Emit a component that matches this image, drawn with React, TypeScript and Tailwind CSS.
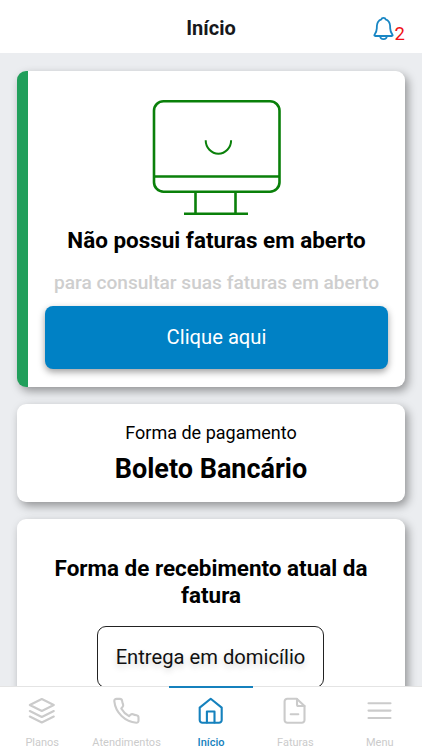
import type { ReactNode } from 'react'

const strokeProps = {
  fill: 'none',
  stroke: 'currentColor',
  strokeWidth: 2.1,
  strokeLinecap: 'round',
  strokeLinejoin: 'round',
} as const

function NavIcon({ children }: { children: ReactNode }) {
  return (
    <svg viewBox="0 0 30 30" className="h-[30px] w-[30px]" {...strokeProps}>
      {children}
    </svg>
  )
}

const tabs = [
  {
    label: 'Planos',
    icon: (
      <>
        <path d="M14.800 3 26.800 9 14.800 15 2.800 9Z" />
        <path d="m2.800 15 12 6 12-6" />
        <path d="m2.800 20.500 12 6 12-6" />
      </>
    ),
  },
  {
    label: 'Atendimentos',
    icon: (
      <path d="M4.500 2.900h3.400c1.300 0 2 .7 2.200 1.900.2 1.300.5 2.500 1 3.700.3.900.1 1.700-.5 2.400l-1.300 1.500c1.800 3.300 4.400 5.900 7.700 7.700l1.500-1.300c.7-.6 1.500-.8 2.400-.5 1.200.5 2.400.8 3.700 1 1.200.2 1.900 1 1.900 2.200v3.200c0 1.300-1 2.100-2.200 2C13.200 25.800 3.500 17 2.300 5.200c-.1-1.300.9-2.300 2.200-2.300Z" />
    ),
  },
  {
    label: 'Início',
    active: true,
    icon: (
      <>
        <path d="M3.700 11.600 14.700 2.800l11 8.800V24a2.700 2.700 0 0 1-2.700 2.700H6.400A2.700 2.700 0 0 1 3.700 24Z" />
        <path d="M10.900 26.500V15.500h7.600v11" />
      </>
    ),
  },
  {
    label: 'Faturas',
    icon: (
      <>
        <path d="M16.700 2.800H7.300a2.700 2.700 0 0 0-2.700 2.700V24a2.700 2.700 0 0 0 2.700 2.700h14.500a2.700 2.700 0 0 0 2.700-2.700V10Z" />
        <path d="M17 3v5.500A1.500 1.500 0 0 0 18.500 10h6M10.700 18.300h7.600" />
      </>
    ),
  },
  {
    label: 'Menu',
    icon: <path d="M3.500 7.300h22M3.500 14.600h22M3.500 22h22" />,
  },
]

function Monitor() {
  return (
    <svg viewBox="0 0 130 118" className="h-[118px] w-[130px]" fill="none" stroke="#0a800a" strokeWidth="2.600">
      <rect x="2" y="2.200" width="125.500" height="90.500" rx="9.500" />
      <path d="M2 77.500h125.500M43.500 93v21M83.500 93v21M32 114.700h64" />
      <path d="M53.700 41.200a12.700 13.500 0 0 0 25.400 0" strokeWidth="2" />
    </svg>
  )
}

function Header() {
  return (
    <header className="grid h-[53px] shrink-0 grid-cols-[1fr_auto_1fr] items-center bg-white px-[17px] pt-[3px]">
      <h1 className="col-start-2 text-[20px] font-bold text-[#17181b]">Início</h1>
      <div className="flex items-end justify-self-end text-[#1886c4]">
        <svg viewBox="0 0 21 26" className="mb-px h-[26px] w-[21px]" {...strokeProps} strokeWidth={1.8}>
          <path d="M1.500 19.800c1.500-1.800 2.200-3.300 2.300-6.400l.1-2.600c.2-3.300 1.600-5.500 4.500-6.500.3-1.800 3.900-1.800 4.200 0 2.900 1 4.300 3.200 4.500 6.500l.1 2.600c.1 3.100.8 4.600 2.300 6.400.4.700.1 1.200-.7 1.200H2.200c-.8 0-1.100-.5-.7-1.200Z" />
          <path d="M7.200 21.200c.3 4 6.300 4 6.600 0" />
        </svg>
        <span className="ml-px translate-y-px text-[18.500px] leading-[18px] text-[#f00f14]">2</span>
      </div>
    </header>
  )
}

export default function App() {
  return (
    <div className="flex h-[750px] w-[422px] flex-col overflow-hidden bg-[#ebedf0] font-[Roboto,sans-serif] text-black">
      <Header />

      <main className="flex min-h-0 flex-1 flex-col gap-[17px] overflow-hidden px-[17px] pt-[18px] text-center">
        <section className="flex h-[316px] shrink-0 flex-col items-center rounded-[9px] border-l-[11px] border-[#219f5b] bg-white px-4 pt-[28px] shadow-[3px_4px_10px_rgba(0,0,0,0.38)]">
          <Monitor />
          <h2 className="mt-[9px] text-[22.450px] leading-[28px] font-bold whitespace-nowrap">Não possui faturas em aberto</h2>
          <p className="mt-[17px] text-[19.100px] leading-[24px] font-medium whitespace-nowrap text-[#cecece]">
            para consultar suas faturas em aberto
          </p>
          <button className="mt-[11px] h-[63px] w-[343px] shrink-0 rounded-[8px] bg-[#0081c5] text-[20.200px] text-white shadow-[0_3px_7px_rgba(0,0,0,0.38)]">
            Clique aqui
          </button>
        </section>

        <section className="h-[98px] shrink-0 rounded-[9px] bg-white pt-[17px] shadow-[3px_4px_10px_rgba(0,0,0,0.38)]">
          <p className="text-[18px] leading-[24px]">Forma de pagamento</p>
          <h2 className="mt-[7px] text-[27px] leading-[34px] font-bold">Boleto Bancário</h2>
        </section>

        <section className="h-[240px] shrink-0 rounded-[9px] bg-white px-[20px] pt-[36px] shadow-[3px_4px_10px_rgba(0,0,0,0.38)]">
          <h2 className="text-[22.450px] leading-[27px] font-bold">
            Forma de recebimento atual da
            <br />
            fatura
          </h2>
          <button className="mt-[17px] mr-px h-[62px] w-[227px] rounded-[9px] border-[1.500px] border-[#222] text-[20.200px] text-[#111] text-shadow-[0_3px_6px_rgba(0,0,0,0.18)]">
            Entrega em domicílio
          </button>
        </section>
      </main>

      <nav className="grid h-[64px] shrink-0 grid-cols-5 border-t border-[#e4e4e4] bg-white">
        {tabs.map((tab) => (
          <a
            key={tab.label}
            className={
              tab.active
                ? 'relative flex flex-col items-center pt-[9px] font-medium text-[#1581bd]'
                : 'relative flex flex-col items-center pt-[9px] text-[#cbcbcb]'
            }
          >
            {tab.active && <span className="absolute inset-x-0 -top-px h-[2px] bg-[#1581bd]" />}
            <NavIcon>{tab.icon}</NavIcon>
            <span className="mt-[10px] text-[11px] leading-[14px]">{tab.label}</span>
          </a>
        ))}
      </nav>
    </div>
  )
}
